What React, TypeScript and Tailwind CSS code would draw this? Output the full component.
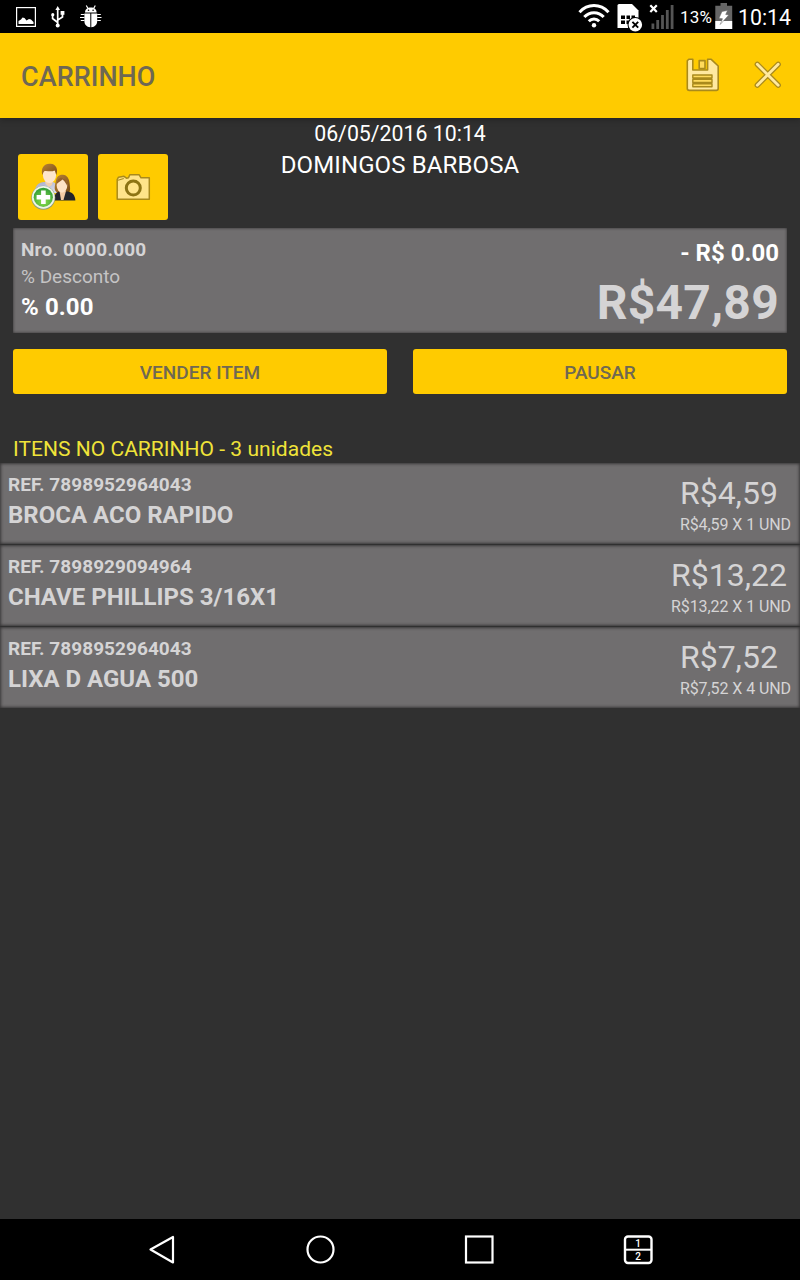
import React from 'react'
import clsx from 'clsx'

const items = [
    { ref: '7898952964043', name: 'BROCA ACO RAPIDO', price: 'R$4,59', detail: 'R$4,59 X 1 UND' },
    { ref: '7898929094964', name: 'CHAVE PHILLIPS 3/16X1', price: 'R$13,22', detail: 'R$13,22 X 1 UND' },
    { ref: '7898952964043', name: 'LIXA D AGUA 500', price: 'R$7,52', detail: 'R$7,52 X 4 UND' },
]

function StatusBar() {
    return (
        <div className="flex h-[33px] shrink-0 items-start bg-black text-white">
            <svg className="ml-4 mt-[7px]" width="20" height="20" viewBox="0 0 20 20">
                <rect x="0.6" y="0.6" width="18.8" height="18.8" fill="none" stroke="#fff" strokeWidth="1.2" />
                <path d="M2.5 17V14L5 12.5L6.5 10.5L8.5 11L10.5 13.5L13 12L15 12.5L17.5 15V17Z" fill="#fff" />
            </svg>
            <svg className="ml-[15px] mt-[6px]" width="14" height="22" viewBox="0 0 14 22">
                <path d="M6.7 3V19M6.7 16.5L1.6 12.5V9M6.7 14L11.5 11V7.5" fill="none" stroke="#fff" strokeWidth="1.7" />
                <path d="M6.7 0L9 4H4.4Z" fill="#fff" />
                <circle cx="1.8" cy="8.7" r="1.6" fill="#fff" />
                <rect x="9.6" y="5" width="3.8" height="3.8" fill="#fff" />
                <circle cx="6.7" cy="19.6" r="2" fill="#fff" />
            </svg>
            <svg className="ml-[15px] mt-[5px]" width="22" height="23" viewBox="0 0 22 23">
                <path d="M6.3 0.5L8 3.5M15.3 0.5L13.6 3.5" stroke="#fff" strokeWidth="1.2" />
                <path d="M5 7.6C5 4 7.5 2.4 10.8 2.4S16.6 4 16.6 7.6Z" fill="#fff" />
                <path d="M4.4 8.6H10.3V22.3C6.5 22 4.4 19.5 4.4 16ZM11.3 8.6H17.2V16C17.2 19.5 15 22 11.3 22.3Z" fill="#fff" />
                <path d="M0.8 9.5H4.5M0 12.5H4.5M0.8 15.5H4.5M17.2 9.5H20.8M17.2 12.5H21.5M17.2 15.5H20.8" stroke="#fff" strokeWidth="1.2" />
                <circle cx="8.5" cy="5.3" r="0.8" fill="#000" />
                <circle cx="13.1" cy="5.3" r="0.8" fill="#000" />
            </svg>

            <svg className="ml-auto mt-[4px]" width="32" height="24" viewBox="0 0 32 24">
                <g fill="none" stroke="#fff" strokeWidth="3">
                    <path d="M1.5 8.2C9.5 -0.6 22.5 -0.6 30.5 8.2" />
                    <path d="M6.3 12.9C11.6 7.2 20.4 7.2 25.7 12.9" />
                    <path d="M10.8 17.2C13.8 14.2 18.2 14.2 21.2 17.2" />
                </g>
                <circle cx="16" cy="21.2" r="2.2" fill="#fff" />
            </svg>
            <svg className="ml-[7px] mt-[4px]" width="26" height="29" viewBox="0 0 26 29">
                <path d="M0.5 1.5Q0.5 0 2 0H15L21.5 6.5V24H0.5Z" fill="#fff" />
                <path d="M4 11.5H8V15H4ZM9.5 11.5H13V15H9.5ZM14.5 11.5H18V15H14.5ZM4 16.5H8V20H4ZM9.5 16.5H12V20H9.5Z" fill="#000" />
                <circle cx="18.3" cy="20.8" r="7.8" fill="#000" />
                <circle cx="18.3" cy="20.8" r="6.8" fill="#fff" />
                <path d="M15.4 17.9L21.2 23.7M21.2 17.9L15.4 23.7" stroke="#000" strokeWidth="1.9" />
            </svg>
            <svg className="ml-[6px] mt-[4px]" width="26" height="25" viewBox="0 0 26 25">
                <path d="M1.3 1.3L7.8 8M7.8 1.3L1.3 8" stroke="#fff" strokeWidth="2.2" />
                <path d="M2.5 19.5H5.3V25H2.5ZM7.3 16H10.1V25H7.3ZM12.1 11H14.9V25H12.1ZM16.9 6H19.7V25H16.9ZM21.7 1H24.5V25H21.7Z" fill="#555" />
            </svg>
            <span className="ml-[5px] text-[17px] leading-[35px] tracking-[0.1px]">13%</span>
            <svg className="ml-[3px] mt-[3px]" width="18" height="26" viewBox="0 0 18 26">
                <path d="M5.5 0H12V2.8H17.2V26H0.3V2.8H5.5Z" fill="#666" />
                <path d="M0.3 18H17.2V26H0.3Z" fill="#fff" />
                <path d="M7 8.5L12.5 7.5L10.7 11.5L13.8 12L5.2 21.5L7.5 15.7L4 15.2Z" fill="#fff" stroke="#666" strokeWidth="0.5" />
            </svg>
            <span className="ml-[5px] mr-[9px] text-[21.3px] leading-[35px]">10:14</span>
        </div>
    )
}

function Header() {
    return (
        <header className="relative z-10 flex h-[85px] shrink-0 items-center bg-[#ffcb00] pl-[21px] pr-[18px] shadow-[0_2px_6px_rgba(0,0,0,0.25)]">
            <h1 className="flex-1 pt-[3px] text-[27px] font-medium leading-none tracking-[0.05px] text-[#6f6853]">CARRINHO</h1>
            <button aria-label="Salvar" className="mr-[34px]">
                <svg className="-mt-0.5" width="34" height="34" viewBox="0 0 34 34">
                    <g fill="#ffe9a0" stroke="#a98a1c" strokeWidth="1.6" strokeLinejoin="round">
                        <path d="M2.8 1.3H6.8V12H21.6V1.3H25.2L32.2 8V30.5Q32.2 32.4 30.3 32.4H3.3Q1.3 32.4 1.3 30.5V2.8Z" />
                        <path d="M13.2 2.6H19V10.6H13.2Z" fill="#ffdb5c" />
                        <path d="M6.8 17H26V20H6.8ZM6.8 21.4H26V24.4H6.8ZM6.8 25.8H26V28.8H6.8Z" fill="#ffdb5c" strokeWidth="1.4" />
                    </g>
                </svg>
            </button>
            <button aria-label="Fechar">
                <svg className="-mt-0.5" width="28" height="28" viewBox="0 0 28 28" strokeLinecap="round">
                    <path d="M3.3 3.3L24.2 24.2M24.2 3.3L3.3 24.2" stroke="#a98a1c" strokeWidth="5.4" />
                    <path d="M3.3 3.3L24.2 24.2M24.2 3.3L3.3 24.2" stroke="#ffe9a0" strokeWidth="2.8" />
                </svg>
            </button>
        </header>
    )
}

function PeopleIcon() {
    return (
        <svg width="46" height="50" viewBox="0 0 46 50">
            <defs>
                <radialGradient id="green" cx="0.5" cy="0.7" r="0.7">
                    <stop offset="0" stopColor="#8ee04a" />
                    <stop offset="1" stopColor="#2f9a38" />
                </radialGradient>
                <linearGradient id="shirt" x1="0" y1="0" x2="1" y2="1">
                    <stop offset="0" stopColor="#a3a9c9" />
                    <stop offset="1" stopColor="#dfe2f0" />
                </linearGradient>
                <linearGradient id="hair" x1="0" y1="0" x2="1" y2="1">
                    <stop offset="0" stopColor="#b98436" />
                    <stop offset="1" stopColor="#7a4a14" />
                </linearGradient>
            </defs>
            <path d="M5 30C5 23 9 20.5 14 20H23C26 21 27 23 27 29V31H5Z" fill="url(#shirt)" />
            <path d="M15 18H23L22 23L19 25L15.5 22Z" fill="#f3cfaa" />
            <ellipse cx="19.5" cy="13" rx="6.6" ry="8" fill="#fde5cb" />
            <path d="M12.3 13C10.5 5 15 1 20.5 1.8C26 2.2 28.5 7 26.3 13C25.5 11 25.5 9.5 24.5 8.5C21 10.5 15.5 8 14 9.5C13 10.5 13 12 12.3 13Z" fill="url(#hair)" />
            <path d="M26.5 30C23.5 28 25 23 26 18.5C27 14 30 12.5 33 12.8C37 13 39.5 17 39.7 22C40 26 41 29 38 32H27Z" fill="url(#hair)" />
            <path d="M24 38.5C24 32 27 29.5 30.5 29.5H38C42.5 30.5 45 33 45.4 38.5Z" fill="#23242b" />
            <path d="M29.5 29H36L33.5 38H31Z" fill="#f2caa5" />
            <ellipse cx="32" cy="23.5" rx="5.3" ry="7.2" fill="#fde2c7" />
            <path d="M26.8 22C27 17 30 15 32.5 16C36 16.5 38 20 37.5 25C36.5 22 35 19.5 32.5 17.5C30.5 19.5 28.5 20 26.8 22Z" fill="#95602a" />
            <circle cx="13.3" cy="35.8" r="12" fill="#8f9d78" />
            <circle cx="13.3" cy="35.3" r="11.4" fill="#edf4e8" />
            <circle cx="13.3" cy="35.3" r="9.6" fill="url(#green)" />
            <path d="M11.1 28.6H15.7V33H20.2V37.6H15.7V42H11.1V37.6H6.6V33H11.1Z" fill="#fff" />
        </svg>
    )
}

function CameraIcon() {
    return (
        <svg width="36" height="28" viewBox="0 0 36 28">
            <path
                d="M2.2 26.3V6.5L3.5 4.2L9 3.3L11.5 5.2L13.5 4.8L14.8 1.8H24.2L26 4.8H34.3V26.3Z"
                fill="#ffe48a"
                stroke="#a98a1c"
                strokeWidth="1.5"
                strokeLinejoin="round"
            />
            <path d="M3 7.3L8.8 5.5" stroke="#a98a1c" strokeWidth="1.2" />
            <circle cx="18.3" cy="15" r="7" fill="#ffe48a" stroke="#8d7414" strokeWidth="3" />
        </svg>
    )
}

function Customer() {
    return (
        <section className="grid h-[110px] grid-cols-[1fr_auto_1fr]">
            <div className="flex items-start gap-2.5 pl-[18px] pt-9">
                <button aria-label="Cliente" className="flex h-[66px] w-[70px] items-center justify-center rounded-[3px] bg-[#ffcb00]">
                    <PeopleIcon />
                </button>
                <button aria-label="Foto" className="flex h-[66px] w-[70px] items-center justify-center rounded-[3px] bg-[#ffcb00]">
                    <CameraIcon />
                </button>
            </div>
            <div className="text-center text-white">
                <div className="text-[21.3px] leading-[31px]">06/05/2016 10:14</div>
                <div className="text-[24px] leading-[32px] tracking-[0.12px]">DOMINGOS BARBOSA</div>
            </div>
        </section>
    )
}

function Summary() {
    return (
        <section className="mx-[13px] flex h-[105px] justify-between bg-[#706e6f] px-2 text-[#d5d4d5] shadow-[inset_0_0_3px_rgba(0,0,0,0.6)]">
            <div className="pt-2">
                <div className="text-[19px] font-bold leading-[27px] tracking-[0.2px]">Nro. 0000.000</div>
                <div className="text-[19px] leading-[27px] text-[#c5c4c5]">% Desconto</div>
                <div className="text-[24px] font-bold leading-[35px] tracking-[0.1px] text-white">% 0.00</div>
            </div>
            <div className="pt-2 text-right">
                <div className="text-[24px] font-bold leading-[34px] text-white">- R$ 0.00</div>
                <div className="text-[48px] font-bold leading-[66px] tracking-[0.3px]">R$47,89</div>
            </div>
        </section>
    )
}

function CartItem({ item }: { item: (typeof items)[number] }) {
    return (
        <li className="flex h-[81px] justify-between bg-[#706e6f] pl-2 pr-[9px] text-[#d5d4d5] shadow-[inset_0_0_3px_1px_rgba(0,0,0,0.5)]">
            <div className="pt-[9px] font-bold">
                <div className="text-[19px] leading-[26px] tracking-[0.05px]">REF. {item.ref}</div>
                <div className="text-[24px] leading-[34px]">{item.name}</div>
            </div>
            <div className="pt-2.5">
                <div className="text-[32px] leading-[40px]">{item.price}</div>
                <div className="text-[16px] leading-[23px] tracking-[-0.08px]">{item.detail}</div>
            </div>
        </li>
    )
}

function ActionButton({ label, className }: { label: string; className?: string }) {
    return (
        <button className={clsx('h-[45px] flex-1 rounded-[3px] bg-[#ffcb00] pt-[3px] text-[19px] font-medium text-[#6f6853]', className)}>
            {label}
        </button>
    )
}

function NavBar() {
    return (
        <nav className="flex h-[61px] shrink-0 items-center justify-between bg-black px-[146px]">
            <svg width="32" height="32" viewBox="0 0 32 32" fill="none" stroke="#fff" strokeWidth="2.2">
                <path d="M27 3V28.5L4.5 15.5Z" strokeLinejoin="round" />
            </svg>
            <svg width="32" height="32" viewBox="0 0 32 32" fill="none" stroke="#fff" strokeWidth="2.2">
                <circle cx="15.5" cy="15.5" r="13" />
            </svg>
            <svg width="32" height="32" viewBox="0 0 32 32" fill="none" stroke="#fff" strokeWidth="2.2">
                <rect x="3" y="2.5" width="26.5" height="26" />
            </svg>
            <svg width="32" height="32" viewBox="0 0 32 32" fill="none" stroke="#fff" strokeWidth="2.4">
                <rect x="3" y="2.5" width="26.5" height="26.5" rx="3" />
                <path d="M3 15.7H29.5" strokeWidth="2" />
                <text x="16.2" y="12.8" fontSize="10" fontWeight="500" textAnchor="middle" fill="#fff" stroke="none">1</text>
                <text x="16.2" y="26" fontSize="10" fontWeight="500" textAnchor="middle" fill="#fff" stroke="none">2</text>
            </svg>
        </nav>
    )
}

export default function App() {
    return (
        <div className="flex h-[1280px] w-[800px] flex-col overflow-hidden bg-[#303030] font-['Roboto',sans-serif]">
            <StatusBar />
            <Header />

            <main className="flex-1">
                <Customer />
                <Summary />

                <div className="mx-[13px] mt-4 flex gap-[26px]">
                    <ActionButton label="VENDER ITEM" />
                    <ActionButton label="PAUSAR" />
                </div>

                <h2 className="mt-[42px] pl-[13px] text-[21px] leading-[27px] tracking-[0.03px] text-[#efe339]">ITENS NO CARRINHO - 3 unidades</h2>
                <ul className="space-y-px">
                    {items.map((item) => (
                        <CartItem key={item.name} item={item} />
                    ))}
                </ul>
            </main>

            <NavBar />
        </div>
    )
}
